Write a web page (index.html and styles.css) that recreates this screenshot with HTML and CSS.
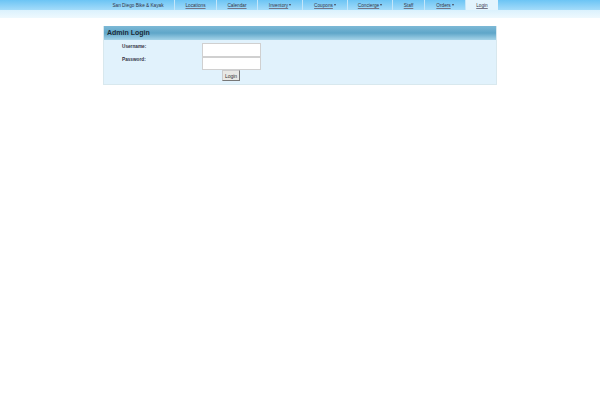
FILE: index.html
```html
<!DOCTYPE html>
<html lang="en">
  <head>
    <meta charset="UTF-8" />
    <title>Admin Login</title>
    <link rel="stylesheet" href="styles.css">
  </head>
  <body>
    <div class="top-bar">
      <ul class="nav">
        <li class="nav-brand">San Diego Bike &amp; Kayak</li>
        <li class="w-locations"><a href="#">Locations</a></li>
        <li class="w-calendar"><a href="#">Calendar</a></li>
        <li class="w-wide"><a href="#">Inventory</a><span class="caret"></span></li>
        <li class="w-wide"><a href="#">Coupons</a><span class="caret"></span></li>
        <li class="w-wide"><a href="#">Concierge</a><span class="caret"></span></li>
        <li class="w-staff"><a href="#">Staff</a></li>
        <li class="w-orders"><a href="#">Orders</a><span class="caret"></span></li>
        <li class="nav-active"><a href="#">Login</a></li>
      </ul>
    </div>
    <div class="sub-bar"></div>

    <div class="panel">
      <h1 class="panel-title">Admin Login</h1>
      <form class="login-form">
        <div class="form-row">
          <label for="username">Username:</label>
          <input id="username" type="text" />
        </div>
        <div class="form-row">
          <label for="password">Password:</label>
          <input id="password" type="password" />
        </div>
        <button type="submit">Login</button>
      </form>
    </div>
  </body>
</html>
```

FILE: styles.css
```css
body {
  margin: 0;
  padding: 0;
  background: #fff;
  font-family: "Liberation Sans", Arial, sans-serif;
  color: #222;
}
.top-bar {
  height: 10px;
  background: linear-gradient(#6cc4f4, #a4dcfa);
}
.nav {
  display: flex;
  width: 396px;
  height: 10px;
  margin: 0 auto;
  padding: 0;
  list-style: none;
  font-size: 4.7px;
  color: #334;
}
.nav li {
  display: flex;
  justify-content: center;
  align-items: center;
  height: 10px;
  box-sizing: border-box;
  border-right: 1px solid #c4e6f9;
}
.nav a {
  color: #334;
  text-decoration-color: #778;
  text-decoration-thickness: 0.5px;
}
.nav-brand {
  width: 73px;
}
.w-locations {
  width: 42px;
}
.w-calendar {
  width: 41px;
}
.w-wide {
  width: 45px;
}
.w-staff {
  width: 32px;
}
.w-orders {
  width: 41px;
}
.nav .nav-active {
  width: 32px;
  background: #e3f4fd;
  border-right: none;
}
.caret {
  width: 0;
  height: 0;
  margin-left: 1px;
  border-left: 1.5px solid transparent;
  border-right: 1.5px solid transparent;
  border-top: 2px solid #445;
}
.sub-bar {
  height: 8px;
  background: linear-gradient(#daf1fd, #eef9fe);
}
.panel {
  width: 394px;
  height: 59px;
  margin: 8px auto 0;
  box-sizing: border-box;
  background: #e1f2fc;
  border: 1px solid #d8e8ee;
  border-top: none;
}
.panel-title {
  height: 14px;
  margin: 0;
  padding-left: 3px;
  background: linear-gradient(#7db9d6, #5fa6c9 50%, #a5d3e8);
  font-size: 7px;
  line-height: 14px;
  color: #1c2c38;
}
.login-form {
  padding-top: 3px;
}
.form-row {
  display: flex;
  height: 13.5px;
  padding-left: 18px;
}
.form-row label {
  width: 80px;
  padding-top: 0.5px;
  font-size: 4.7px;
  font-weight: bold;
  color: #334;
}
.form-row input {
  width: 59px;
  height: 13.5px;
  padding: 0;
  box-sizing: border-box;
  background: #fff;
  border: 1px solid #d0d0d0;
}
.login-form button {
  display: block;
  width: 18px;
  height: 11px;
  margin: 0 0 0 118px;
  padding: 0;
  background: #e8e8e4;
  border: 1px solid #777;
  border-top-color: #ccc;
  border-left-color: #ccc;
  font-family: inherit;
  font-size: 5px;
  color: #333;
}
```
